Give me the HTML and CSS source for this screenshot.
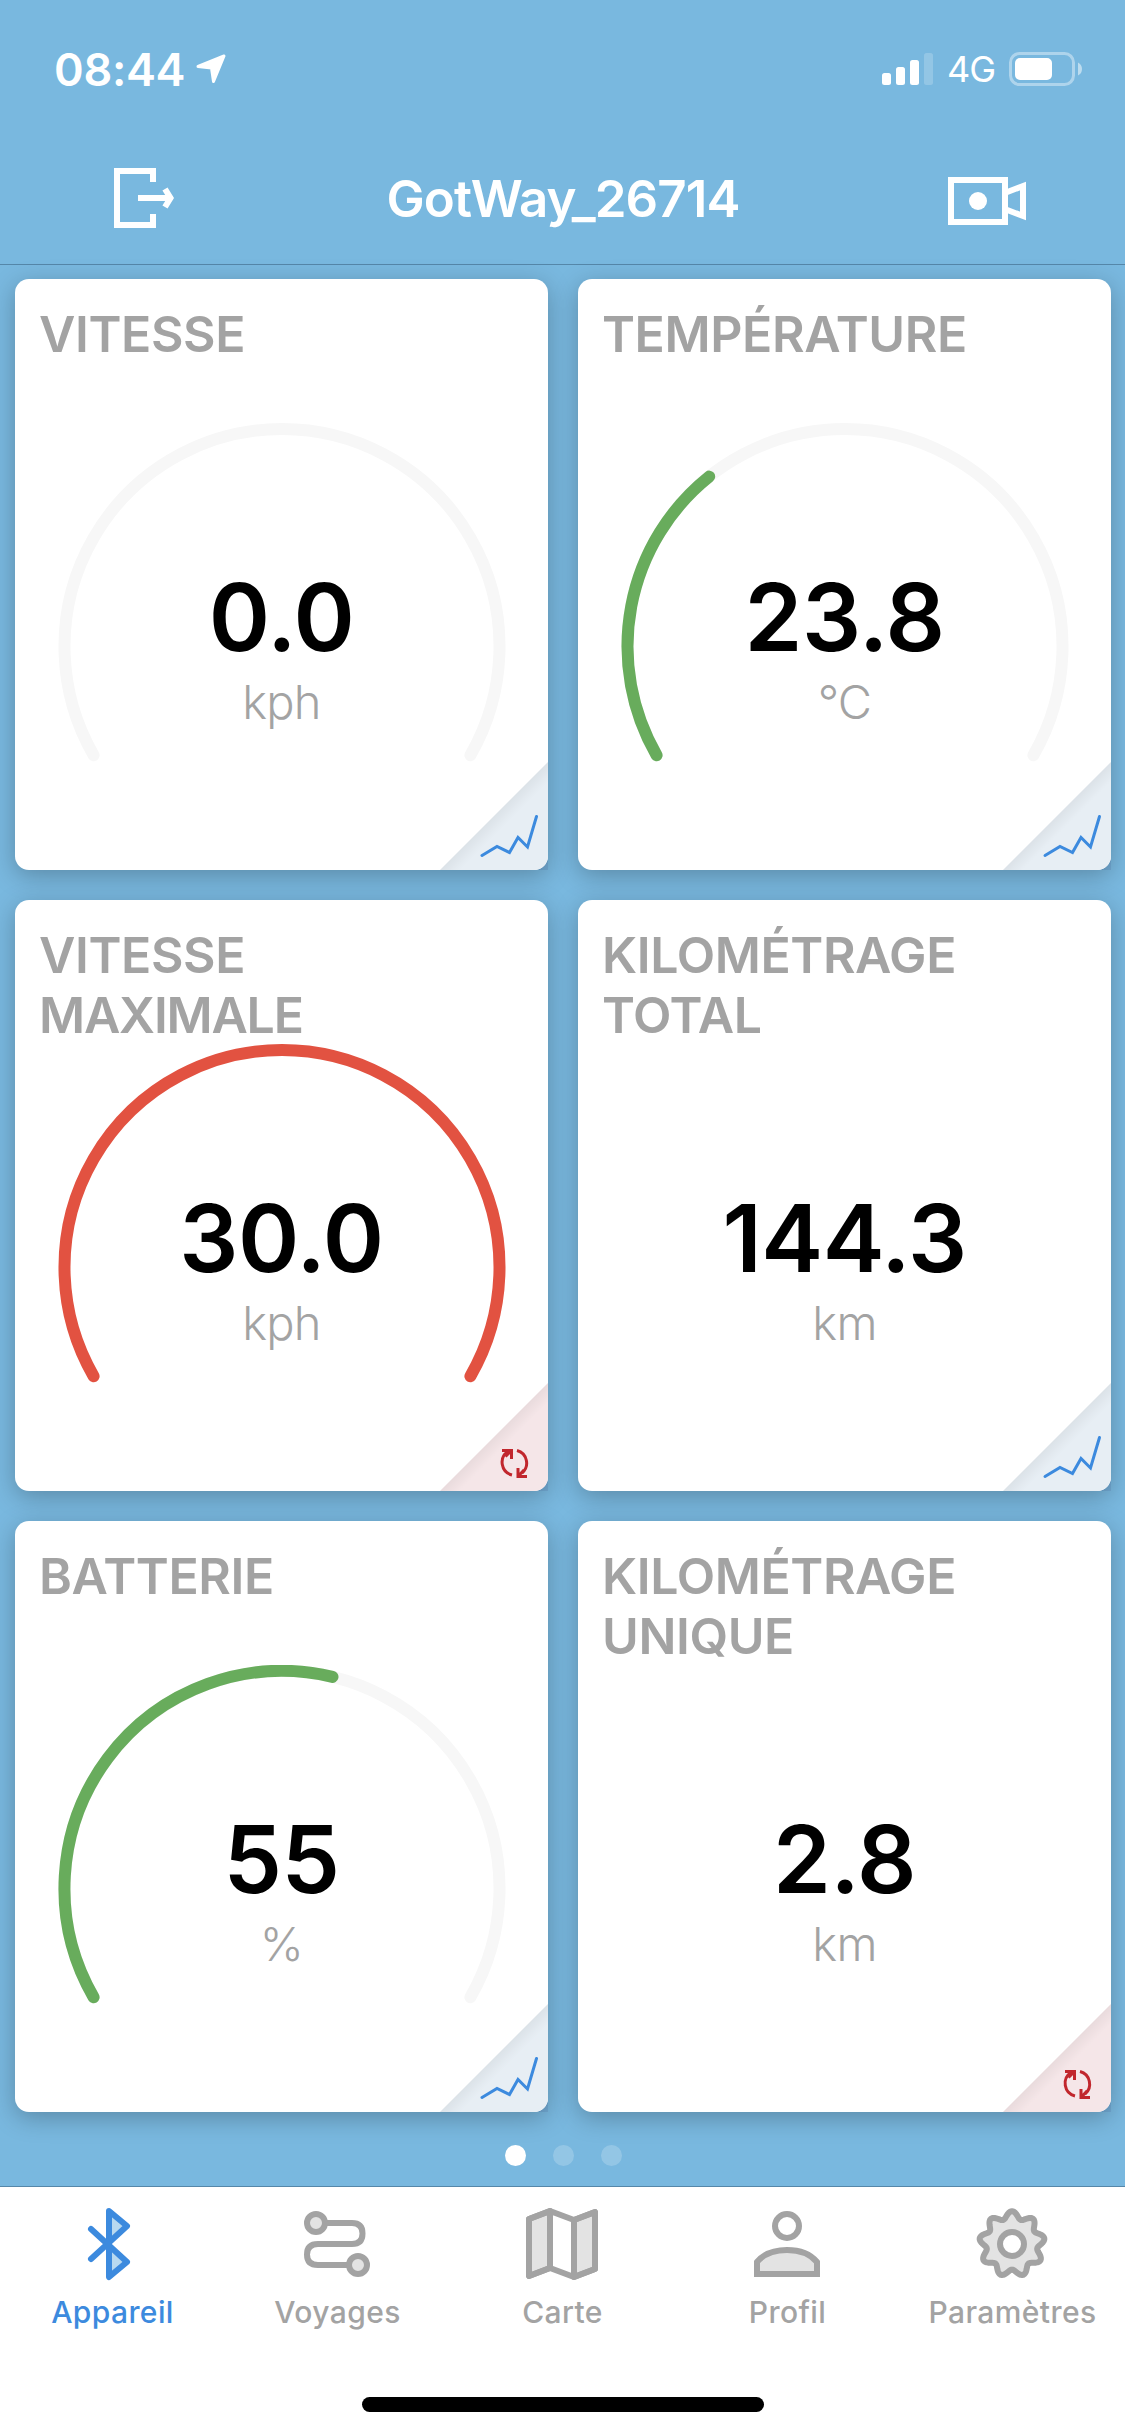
FILE: index.html
```html
<!DOCTYPE html>
<html lang="fr">

<head>
    <meta charset="utf-8">
    <meta name="viewport" content="width=device-width, initial-scale=1.0">
    <title>GotWay_26714</title>
    <link rel="stylesheet" href="styles.css">
</head>

<body>
    <!-- shared icons -->
    <svg class="defs" width="0" height="0">
        <linearGradient id="fold" gradientUnits="userSpaceOnUse" x1="54" y1="54" x2="64" y2="64">
            <stop offset="0" stop-opacity="0.05" />
            <stop offset="1" stop-opacity="0" />
        </linearGradient>
        <symbol id="icon-chart" viewBox="0 0 108 108">
            <path class="corner" d="M0 108L108 0V108Z" />
            <path class="fold" d="M0 108L108 0V108Z" />
            <path class="line" d="M42 93.500L57 84.500L69.500 90.500L78 75.500L87.500 85L96.500 54.500" />
        </symbol>
        <symbol id="icon-reset" viewBox="0 0 108 108">
            <path class="corner" d="M0 108L108 0V108Z" />
            <path class="fold" d="M0 108L108 0V108Z" />
            <path class="line" d="M72 92A13 13 0 0 1 68 68.500M62 67.500H71.500V76M77 67.500A13 13 0 0 1 82 90M87 93.500H78V85M71.500 67.500L65.500 73.500M78 93.500L84 87" />
        </symbol>
    </svg>

    <div class="status-bar">
        <div class="time">08:44</div>
        <svg class="location" width="30" height="30" viewBox="0 0 30 30">
            <path d="M2 12.500L28 2L17.500 27.500L15.500 14Z" />
        </svg>
        <svg class="signal" width="52" height="34" viewBox="0 0 52 34">
            <rect x="0" y="21" width="9" height="12" rx="2.500" />
            <rect x="14" y="15" width="9" height="18" rx="2.500" />
            <rect x="28" y="8" width="9" height="25" rx="2.500" />
            <rect class="off" x="42" y="1" width="9" height="32" rx="2.500" />
        </svg>
        <div class="network">4G</div>
        <svg class="battery" width="74" height="34" viewBox="0 0 74 34">
            <rect class="shell" x="1.500" y="1.500" width="63" height="31" rx="9" />
            <rect x="6" y="6" width="37" height="22" rx="5" />
            <path class="tip" d="M69 10.500Q73 12.500 73 17T69 23.500Z" />
        </svg>
    </div>

    <div class="header">
        <svg width="62" height="62" viewBox="0 0 62 62">
            <path d="M40 15V4H4V58H40V47M25 31H57M52 22L57.500 31L52 40" />
        </svg>
        <h1>GotWay_26714</h1>
        <svg width="80" height="56" viewBox="0 0 80 56">
            <path d="M4 10H58V52H4ZM59 22.500L76 16V46L59 39.500" />
            <circle cx="31" cy="31" r="9" />
        </svg>
    </div>

    <div class="cards">
        <div class="card">
            <h2>VITESSE</h2>
            <svg class="gauge" viewBox="0 0 448 340">
                <path class="track" d="M35.600 332.200A217.500 217.500 0 1 1 412.400 332.200" />
            </svg>
            <div class="value">0.0</div>
            <div class="unit">kph</div>
            <svg class="action chart"><use href="#icon-chart" /></svg>
        </div>
        <div class="card">
            <h2>TEMPÉRATURE</h2>
            <svg class="gauge" viewBox="0 0 448 340">
                <path class="track" d="M35.600 332.200A217.500 217.500 0 1 1 412.400 332.200" />
                <path class="green" d="M35.600 332.200A217.500 217.500 0 0 1 88.200 53.600" />
            </svg>
            <div class="value">23.8</div>
            <div class="unit">°C</div>
            <svg class="action chart"><use href="#icon-chart" /></svg>
        </div>
        <div class="card">
            <h2>VITESSE<br><span class="tight">MAXIMALE</span></h2>
            <svg class="gauge" viewBox="0 0 448 340">
                <path class="red" d="M35.600 332.200A217.500 217.500 0 1 1 412.400 332.200" />
            </svg>
            <div class="value">30.0</div>
            <div class="unit">kph</div>
            <svg class="action reset"><use href="#icon-reset" /></svg>
        </div>
        <div class="card">
            <h2>KILOMÉTRAGE<br>TOTAL</h2>
            <div class="value">144.3</div>
            <div class="unit">km</div>
            <svg class="action chart"><use href="#icon-chart" /></svg>
        </div>
        <div class="card">
            <h2>BATTERIE</h2>
            <svg class="gauge" viewBox="0 0 448 340">
                <path class="track" d="M35.600 332.200A217.500 217.500 0 1 1 412.400 332.200" />
                <path class="green" d="M35.600 332.200A217.500 217.500 0 0 1 274.500 11.900" />
            </svg>
            <div class="value">55</div>
            <div class="unit">%</div>
            <svg class="action chart"><use href="#icon-chart" /></svg>
        </div>
        <div class="card">
            <h2>KILOMÉTRAGE<br>UNIQUE</h2>
            <div class="value">2.8</div>
            <div class="unit">km</div>
            <svg class="action reset"><use href="#icon-reset" /></svg>
        </div>
    </div>

    <div class="dots">
        <span class="dot active"></span>
        <span class="dot"></span>
        <span class="dot"></span>
    </div>

    <div class="tabs">
        <div class="tab active">
            <svg width="78" height="78" viewBox="0 0 78 78">
                <path class="fill" d="M36 6L54 21L36 39L54 57L36 72Z" />
                <path d="M18 24L54 57L36 72V6L54 21L18 54" />
            </svg>
            <span>Appareil</span>
        </div>
        <div class="tab">
            <svg width="78" height="78" viewBox="0 0 78 78">
                <path d="M27 18H54Q64.500 18 64.500 28.500T54 39H20Q9 39 9 49.500T20 60H51" />
                <circle class="fill" cx="18" cy="18" r="9" />
                <circle class="fill" cx="60" cy="60" r="9" />
            </svg>
            <span>Voyages</span>
        </div>
        <div class="tab">
            <svg width="78" height="78" viewBox="0 0 78 78">
                <path class="fill" d="M6 14L27 6V63L6 71ZM51 15L72 7V64L51 72Z" />
                <path d="M6 14L27 6L51 15L72 7V64L51 72L27 63L6 71ZM27 6V63M51 15V72" />
            </svg>
            <span>Carte</span>
        </div>
        <div class="tab">
            <svg width="78" height="78" viewBox="0 0 78 78">
                <circle cx="39" cy="21" r="12" />
                <path class="fill sharp" d="M9 69V57Q19 45 39 45T69 57V69Z" />
            </svg>
            <span>Profil</span>
        </div>
        <div class="tab">
            <svg width="78" height="78" viewBox="0 0 78 78">
                <path id="gear" class="fill" d="" />
                <circle class="hole" cx="39" cy="39" r="12" />
            </svg>
            <span>Paramètres</span>
        </div>
    </div>
    <div class="home-bar"></div>

    <script>
        // nine rounded teeth around the centre of the gear icon
        var points = [];
        for (var i = 0; i < 180; i++) {
            var a = i * Math.PI / 90;
            var r = 29.2 + 3.6 * Math.cos(9 * a);
            points.push((39 + r * Math.sin(a)).toFixed(2) + " " + (39 - r * Math.cos(a)).toFixed(2));
        }
        document.getElementById("gear").setAttribute("d", "M" + points.join("L") + "Z");
    </script>
</body>

</html>
```
FILE: styles.css
```css
* {
    box-sizing: border-box;
}

body {
    margin: 0;
    width: 1125px;
    height: 2436px;
    overflow: hidden;
    display: flex;
    flex-direction: column;
    background-color: #79b8df;
    font-family: Inter, "Liberation Sans", sans-serif;
}

svg {
    display: block;
    flex: none;
}

.defs {
    position: absolute;
}

.status-bar {
    height: 132px;
    padding: 6px 42px 0 54px;
    display: flex;
    align-items: center;
    color: white;
    fill: white;
}

.time {
    width: 131px;
    font-size: 45px;
    font-weight: 600;
    letter-spacing: -0.3px;
    white-space: nowrap;
}

.location {
    margin-left: 11px;
    stroke: white;
    stroke-width: 3;
    stroke-linejoin: round;
}

.signal {
    margin-left: auto;
}

.signal .off {
    opacity: 0.2;
}

.network {
    flex: none;
    width: 75px;
    padding-left: 13px;
    font-size: 36px;
    font-weight: 400;
    letter-spacing: -1px;
}

.battery .shell {
    fill: none;
    stroke: white;
    stroke-width: 3;
    opacity: 0.4;
}

.battery .tip {
    opacity: 0.5;
}

.header {
    height: 133px;
    padding: 0 98px 0 113px;
    display: flex;
    align-items: center;
    justify-content: space-between;
    border-bottom: 1px solid #5587a9;
    color: white;
}

.header svg {
    fill: none;
    stroke: white;
    stroke-width: 6;
}

.header circle {
    fill: white;
    stroke: none;
}

h1 {
    margin: 0 0 0 4px;
    font-size: 51px;
    font-weight: 600;
    letter-spacing: -0.9px;
}

.cards {
    padding: 14px 14px 0 15px;
    display: grid;
    grid-template-columns: 1fr 1fr;
    grid-auto-rows: 591px;
    gap: 30px;
}

.card {
    position: relative;
    padding: 25px 24px;
    border-radius: 14px;
    background-color: white;
    box-shadow: 0 6px 24px rgba(0, 0, 0, 0.25);
    text-align: center;
}

/* square end of the folded corner, under the rounded card */
.card::before {
    content: "";
    position: absolute;
    z-index: -1;
    right: 0;
    bottom: 0;
    width: 14px;
    height: 14px;
    background-color: rgba(70, 90, 150, 0.15);
}

h2 {
    margin: 0;
    height: 268px;
    font-size: 50px;
    line-height: 60px;
    font-weight: 600;
    letter-spacing: -0.4px;
    text-align: left;
    color: #a3a3a3;
}

.tight {
    letter-spacing: -1.2px;
}

/* the arc lies behind the reading */
.gauge {
    position: absolute;
    left: 42.5px;
    top: 144px;
    width: 448px;
    height: 340px;
    fill: none;
    stroke-width: 12;
    stroke-linecap: round;
}

.track {
    stroke: #f7f7f7;
}

.green {
    stroke: #68ac5c;
}

.red {
    stroke: #e25241;
}

.value {
    position: relative;
    height: 90px;
    line-height: 90px;
    font-size: 93px;
    font-weight: 600;
    letter-spacing: -0.5px;
}

.unit {
    padding-top: 2px;
    line-height: 76px;
    font-size: 47px;
    font-weight: 300;
    letter-spacing: -0.7px;
    color: #a3a3a3;
}

.action {
    position: absolute;
    right: 0;
    bottom: 0;
    width: 108px;
    height: 108px;
    border-bottom-right-radius: 14px;
    fill: none;
    stroke-linejoin: miter;
}

.action.chart {
    color: #e7eef4;
    stroke: #3c8ade;
    stroke-width: 3;
    stroke-linecap: round;
}

.action.reset {
    color: #f5e6e8;
    stroke: #c1272d;
    stroke-width: 3;
}

.corner {
    fill: currentColor;
    stroke: none;
}

.fold {
    fill: url(#fold);
    stroke: none;
}

.dots {
    height: 74px;
    padding: 33px 0 0 1px;
    display: flex;
    justify-content: center;
    gap: 27px;
}

.dot {
    width: 21px;
    height: 21px;
    border-radius: 50%;
    background-color: rgba(255, 255, 255, 0.2);
}

.dot.active {
    background-color: white;
}

.tabs {
    height: 211px;
    padding-top: 18px;
    display: grid;
    grid-template-columns: repeat(5, 1fr);
    border-top: 1px solid #5587a9;
    background-color: white;
}

.tab {
    display: flex;
    flex-direction: column;
    align-items: center;
    color: #a3a3a3;
    font-size: 30px;
    font-weight: 500;
    letter-spacing: 0.4px;
}

.tab.active {
    color: #3c8ade;
}

.tab span {
    margin-top: 11px;
    line-height: 36px;
}

.tab svg {
    margin-left: -2px;
    fill: none;
    stroke: currentColor;
    stroke-width: 6;
    stroke-linejoin: round;
    stroke-linecap: round;
}

.tab .fill {
    fill: #e3e3e3;
}

.tab.active .fill {
    fill: #b8d9f0;
    stroke: none;
}

.tab .sharp {
    stroke-linejoin: miter;
}

.tab .hole {
    fill: white;
}

.home-bar {
    flex: 1;
    background-color: white;
}

.home-bar::before {
    content: "";
    display: block;
    width: 402px;
    height: 15px;
    margin: 0 auto;
    border-radius: 8px;
    background-color: black;
}
```
